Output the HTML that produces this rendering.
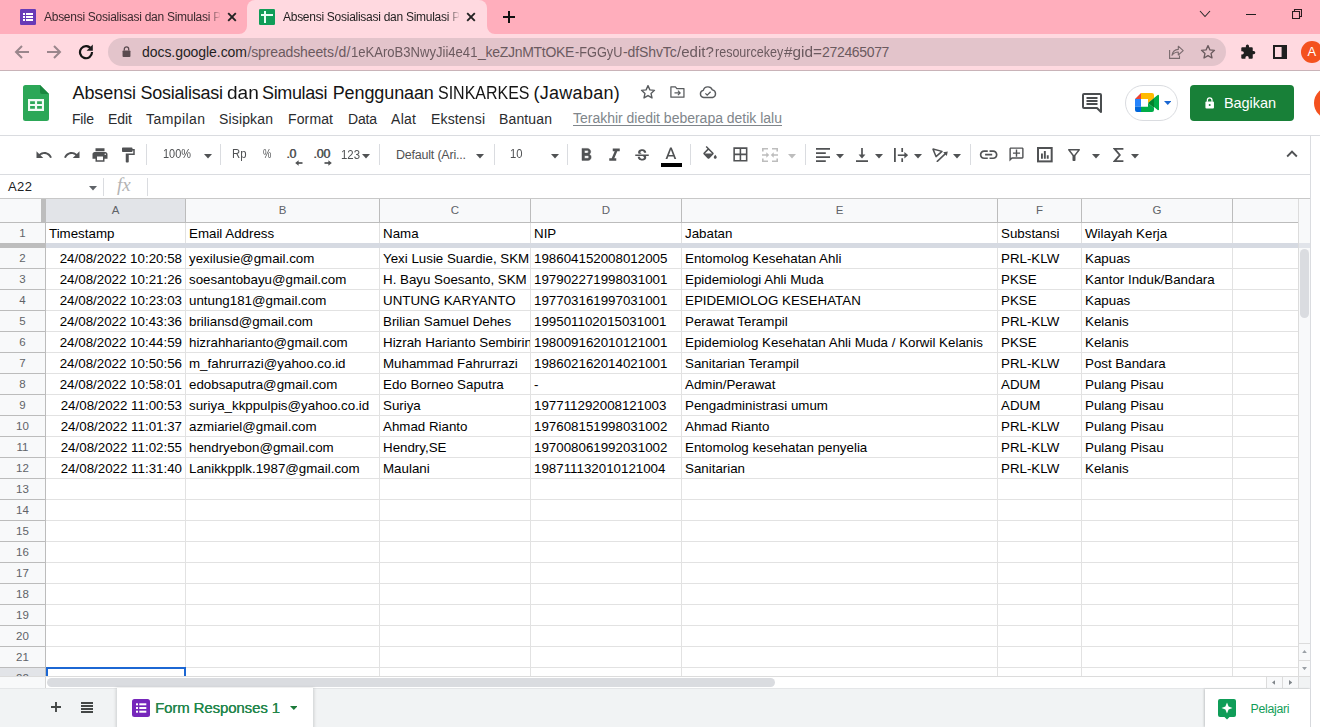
<!DOCTYPE html>
<html><head><meta charset="utf-8"><title>Absensi</title>
<style>
html,body{margin:0;padding:0;}
body{width:1320px;height:727px;overflow:hidden;position:relative;background:#fff;font-family:"Liberation Sans",sans-serif;}
.t{position:absolute;white-space:pre;font-family:"Liberation Sans",sans-serif;}
.b{position:absolute;display:block;}
#root{position:relative;width:1320px;height:727px;overflow:hidden;background:#fff;}
</style></head><body>
<div id="root">
<div class="b" style="left:0px;top:0px;width:1320px;height:34px;background:#ffaebc;"></div>
<div class="b" style="left:0px;top:34px;width:1320px;height:36px;background:#ffd9e0;"></div>
<div class="b" style="left:0px;top:70px;width:1320px;height:1px;background:#c9b3b8;"></div>
<div class="b" style="left:247px;top:0px;width:240px;height:34px;background:#ffd9e0;border-radius:8px 8px 0 0;"></div>
<svg class="b" style="left:239px;top:26px;" width="8" height="8" viewBox="0 0 8 8"><path d="M8 0 V8 H0 A8 8 0 0 0 8 0 Z" fill="#ffd9e0"/></svg>
<svg class="b" style="left:487px;top:26px;" width="8" height="8" viewBox="0 0 8 8"><path d="M0 0 V8 H8 A8 8 0 0 1 0 0 Z" fill="#ffd9e0"/></svg>
<svg class="b" style="left:20px;top:9px;" width="16" height="16" viewBox="0 0 16 16"><rect x="0" y="0" width="16" height="16" rx="1.3" fill="#673ab7"/><g fill="#fff"><rect x="3" y="4" width="2" height="2"/><rect x="6" y="4" width="7" height="2"/><rect x="3" y="7" width="2" height="2"/><rect x="6" y="7" width="7" height="2"/><rect x="3" y="10" width="2" height="2"/><rect x="6" y="10" width="7" height="2"/></g></svg>
<svg class="b" style="left:259px;top:9px;" width="16" height="16" viewBox="0 0 16 16"><rect x="0" y="0" width="16" height="16" rx="1.3" fill="#0f9d58"/><g fill="#e6fff6"><rect x="5" y="2" width="2" height="12"/><rect x="2" y="5" width="12" height="2"/></g></svg>
<span id="t1" class="t" style="left:44px;top:9px;font-size:12px;line-height:16px;color:#3a2a2e;font-weight:normal;-webkit-mask-image:linear-gradient(90deg,#000 0,#000 164px,transparent 177px);mask-image:linear-gradient(90deg,#000 0,#000 164px,transparent 177px);overflow:hidden;width:176px;letter-spacing:-0.27px;">Absensi Sosialisasi dan Simulasi Penggunaan</span>
<span id="t2" class="t" style="left:283px;top:9px;font-size:12px;line-height:16px;color:#1f1f1f;font-weight:normal;-webkit-mask-image:linear-gradient(90deg,#000 0,#000 164px,transparent 177px);mask-image:linear-gradient(90deg,#000 0,#000 164px,transparent 177px);overflow:hidden;width:176px;letter-spacing:-0.27px;">Absensi Sosialisasi dan Simulasi Penggunaan</span>
<svg class="b" style="left:227px;top:12px;" width="10" height="10" viewBox="0 0 10 10"><path d="M1.2 1.2 L8.8 8.8 M8.8 1.2 L1.2 8.8" stroke="#222" stroke-width="1.9" fill="none"/></svg>
<svg class="b" style="left:466px;top:12px;" width="10" height="10" viewBox="0 0 10 10"><path d="M1.2 1.2 L8.8 8.8 M8.8 1.2 L1.2 8.8" stroke="#222" stroke-width="1.9" fill="none"/></svg>
<svg class="b" style="left:503.1px;top:10.8px;" width="12" height="12" viewBox="0 0 12 12"><path d="M6 0 V12 M0 6 H12" stroke="#111" stroke-width="2" fill="none"/></svg>
<svg class="b" style="left:1199px;top:9px;" width="12" height="10" viewBox="0 0 12 10"><path d="M1 2 L6 7.5 L11 2" stroke="#2b2b2b" stroke-width="1.1" fill="none"/></svg>
<div class="b" style="left:1246px;top:14px;width:10px;height:1px;background:#1f1f1f;"></div>
<svg class="b" style="left:1292px;top:9px;" width="10" height="10" viewBox="0 0 10 10"><path d="M0.5 2.5 H7.5 V9.5 H0.5 Z M2.5 2.5 V0.5 H9.5 V7.5 H7.5" stroke="#2a1a1e" stroke-width="1.1" fill="none"/></svg>
<svg class="b" style="left:14px;top:44px;" width="16" height="16" viewBox="0 0 16 16"><path d="M15 8 H2 M8 2 L2 8 L8 14" stroke="#9a868c" stroke-width="2" fill="none"/></svg>
<svg class="b" style="left:46px;top:44px;" width="16" height="16" viewBox="0 0 16 16"><path d="M1 8 H14 M8 2 L14 8 L8 14" stroke="#9a868c" stroke-width="2" fill="none"/></svg>
<svg class="b" style="left:78px;top:44px;" width="16" height="16" viewBox="0 0 16 16"><path d="M13.2 5.2 A6 6 0 1 0 14 8" stroke="#151515" stroke-width="2.2" fill="none"/><path d="M14.8 0.6 V6.8 H8.6 Z" fill="#1f1f1f"/></svg>
<div class="b" style="left:108px;top:38px;width:1118px;height:28px;background:#e3c4cb;border-radius:14px;"></div>
<svg class="b" style="left:121.6px;top:45.7px;" width="9" height="11.4" viewBox="0 0 10 13"><rect x="0.5" y="5" width="9" height="7.5" rx="1" fill="#5a4b4f"/><path d="M2.5 5 V3.5 A2.5 2.5 0 0 1 7.5 3.5 V5" stroke="#5a4b4f" stroke-width="1.5" fill="none"/></svg>
<span id="t3" class="t" style="left:142px;top:43px;font-size:14px;line-height:18px;color:#1f1f1f;font-weight:normal;letter-spacing:-0.060px;">docs.google.com</span>
<span id="t4" class="t" style="left:247.4px;top:43px;font-size:14px;line-height:18px;color:#6b5a5f;font-weight:normal;letter-spacing:-0.121px;">/spreadsheets</span>
<span id="t5" class="t" style="left:334.5px;top:43px;font-size:14px;line-height:18px;color:#6b5a5f;font-weight:normal;letter-spacing:0.161px;">/d/</span>
<span id="t6" class="t" style="left:351px;top:43px;font-size:14px;line-height:18px;color:#6b5a5f;font-weight:normal;transform:scaleX(0.9335);transform-origin:left center;">1eKAroB3NwyJii4e41</span>
<span id="t7" class="t" style="left:478px;top:43px;font-size:14px;line-height:18px;color:#6b5a5f;font-weight:normal;letter-spacing:-0.290px;">_keZJnMTtOKE</span>
<span id="t8" class="t" style="left:575px;top:43px;font-size:14px;line-height:18px;color:#6b5a5f;font-weight:normal;transform:scaleX(0.9096);transform-origin:left center;">-FGGyU</span>
<span id="t9" class="t" style="left:623px;top:43px;font-size:14px;line-height:18px;color:#6b5a5f;font-weight:normal;letter-spacing:-0.110px;">-dfShvTc</span>
<span id="t10" class="t" style="left:677.3px;top:43px;font-size:14px;line-height:18px;color:#6b5a5f;font-weight:normal;transform:scaleX(1.0745);transform-origin:left center;">/edit?</span>
<span id="t11" class="t" style="left:714.7px;top:43px;font-size:14px;line-height:18px;color:#6b5a5f;font-weight:normal;transform:scaleX(0.8942);transform-origin:left center;">resourcekey</span>
<span id="t12" class="t" style="left:783.5px;top:43px;font-size:14px;line-height:18px;color:#6b5a5f;font-weight:normal;transform:scaleX(1.0965);transform-origin:left center;">#gid=</span>
<span id="t13" class="t" style="left:822.1px;top:43px;font-size:14px;line-height:18px;color:#6b5a5f;font-weight:normal;letter-spacing:-0.347px;">272465077</span>
<svg class="b" style="left:1169px;top:45px;" width="15" height="14" viewBox="0 0 15 14"><path d="M0.6 5 V13.4 H10.5 V10.5" stroke="#7a6a6e" stroke-width="1.1" fill="none"/><path d="M3 10.3 C3.6 6.6 6 4.6 9.3 4.4 V1.2 L14.2 5.6 L9.3 10 V7 C6.6 7 4.6 8 3 10.3 Z" stroke="#7a6a6e" stroke-width="1.1" fill="none" stroke-linejoin="round"/></svg>
<svg class="b" style="left:1200.2px;top:44.3px;" width="16" height="16" viewBox="0 0 18 18"><path d="M9 1.8 L11.1 6.6 L16.3 7.1 L12.4 10.6 L13.5 15.7 L9 13 L4.5 15.7 L5.6 10.6 L1.7 7.1 L6.9 6.6 Z" stroke="#6a5a5e" stroke-width="1.5" fill="none" stroke-linejoin="round"/></svg>
<svg class="b" style="left:1239.3px;top:43.6px;" width="16.5" height="16.5" viewBox="0 0 18 18"><path d="M7.5 2.2 a1.7 1.7 0 0 1 3.4 0 V3.5 H14 a1 1 0 0 1 1 1 V7.6 h1 a1.8 1.8 0 0 1 0 3.6 h-1 V15 a1 1 0 0 1 -1 1 H10.6 v-1 a1.8 1.8 0 0 0 -3.6 0 v1 H3.5 a1 1 0 0 1 -1 -1 V11.4 h1 a1.8 1.8 0 0 0 0 -3.6 h-1 V4.5 a1 1 0 0 1 1 -1 H7.5 Z" fill="#1f1f1f"/></svg>
<svg class="b" style="left:1273px;top:45px;" width="14" height="14" viewBox="0 0 14 14"><rect x="1" y="1" width="12" height="12" fill="none" stroke="#1f1f1f" stroke-width="2"/><rect x="8.6" y="1" width="4.4" height="12" fill="#1f1f1f"/></svg>
<div class="b" style="left:1301px;top:41px;width:22px;height:22px;background:#f4511e;border-radius:50%;"></div>
<span id="t14" class="t" style="left:1307.5px;top:44px;font-size:13px;line-height:16px;color:#fff;font-weight:normal;">A</span>
<div class="b" style="left:0px;top:135px;width:1320px;height:1px;background:#dadce0;"></div>
<svg class="b" style="left:23px;top:85px;" width="26" height="36" viewBox="0 0 26 36"><path d="M2.5 0 H17 L26 9 V33.5 A2.5 2.5 0 0 1 23.5 36 H2.5 A2.5 2.5 0 0 1 0 33.5 V2.5 A2.5 2.5 0 0 1 2.5 0 Z" fill="#2ca757"/><path d="M17 0 L26 9 H19 A2 2 0 0 1 17 7 Z" fill="#19873f"/><path d="M5 14 H21 V26 H5 Z M7.1 16.3 V18.9 H11.9 V16.3 Z M14.1 16.3 V18.9 H18.9 V16.3 Z M7.1 21.1 V23.7 H11.9 V21.1 Z M14.1 21.1 V23.7 H18.9 V21.1 Z" fill="#f1fbf4" fill-rule="evenodd"/></svg>
<span id="t15" class="t" style="left:72.5px;top:81px;font-size:18px;line-height:24px;color:#141414;font-weight:normal;letter-spacing:-0.074px;">Absensi</span>
<span id="t16" class="t" style="left:140.5px;top:81px;font-size:18px;line-height:24px;color:#141414;font-weight:normal;letter-spacing:-0.255px;">Sosialisasi</span>
<span id="t17" class="t" style="left:227.4px;top:81px;font-size:18px;line-height:24px;color:#141414;font-weight:normal;transform:scaleX(1.0583);transform-origin:left center;">dan</span>
<span id="t18" class="t" style="left:262.1px;top:81px;font-size:18px;line-height:24px;color:#141414;font-weight:normal;letter-spacing:-0.376px;">Simulasi</span>
<span id="t19" class="t" style="left:332.7px;top:81px;font-size:18px;line-height:24px;color:#141414;font-weight:normal;letter-spacing:-0.101px;">Penggunaan</span>
<span id="t20" class="t" style="left:438px;top:81px;font-size:18px;line-height:24px;color:#141414;font-weight:normal;transform:scaleX(0.8884);transform-origin:left center;">SINKARKES</span>
<span id="t21" class="t" style="left:533.4px;top:81px;font-size:18px;line-height:24px;color:#141414;font-weight:normal;letter-spacing:0.300px;">(Jawaban)</span>
<svg class="b" style="left:640.1px;top:84px;" width="16" height="16" viewBox="0 0 18 18"><path d="M9 1.8 L11.1 6.6 L16.3 7.1 L12.4 10.6 L13.5 15.7 L9 13 L4.5 15.7 L5.6 10.6 L1.7 7.1 L6.9 6.6 Z" stroke="#585b5e" stroke-width="1.55" fill="none" stroke-linejoin="round"/></svg>
<svg class="b" style="left:669.8px;top:85px;" width="15.3" height="14.4" viewBox="0 0 17 16"><path d="M1 2 H6 L7.6 4 H15.5 V13.5 H1 Z" stroke="#585b5e" stroke-width="1.4" fill="none" stroke-linejoin="round"/><path d="M5 8.8 H11 M8.8 6.3 L11.3 8.8 L8.8 11.3" stroke="#585b5e" stroke-width="1.3" fill="none"/></svg>
<svg class="b" style="left:699px;top:85px;" width="18" height="14" viewBox="0 0 18 14"><path d="M4.6 12.5 A3.6 3.6 0 0 1 4.3 5.4 A4.8 4.8 0 0 1 13.4 4.9 A3.9 3.9 0 0 1 13.6 12.5 Z" stroke="#585b5e" stroke-width="1.4" fill="none" stroke-linejoin="round"/><path d="M6.4 8.4 L8.2 10.2 L11.6 6.8" stroke="#585b5e" stroke-width="1.3" fill="none"/></svg>
<span id="t22" class="t" style="left:72px;top:109.5px;font-size:14px;line-height:18px;color:#2a2b2e;font-weight:normal;letter-spacing:-0.188px;">File</span>
<span id="t23" class="t" style="left:108px;top:109.5px;font-size:14px;line-height:18px;color:#2a2b2e;font-weight:normal;letter-spacing:-0.042px;">Edit</span>
<span id="t24" class="t" style="left:146px;top:109.5px;font-size:14px;line-height:18px;color:#2a2b2e;font-weight:normal;letter-spacing:0.424px;">Tampilan</span>
<span id="t25" class="t" style="left:219px;top:109.5px;font-size:14px;line-height:18px;color:#2a2b2e;font-weight:normal;letter-spacing:0.154px;">Sisipkan</span>
<span id="t26" class="t" style="left:288px;top:109.5px;font-size:14px;line-height:18px;color:#2a2b2e;font-weight:normal;letter-spacing:0.131px;">Format</span>
<span id="t27" class="t" style="left:348px;top:109.5px;font-size:14px;line-height:18px;color:#2a2b2e;font-weight:normal;letter-spacing:-0.193px;">Data</span>
<span id="t28" class="t" style="left:391px;top:109.5px;font-size:14px;line-height:18px;color:#2a2b2e;font-weight:normal;letter-spacing:0.292px;">Alat</span>
<span id="t29" class="t" style="left:431px;top:109.5px;font-size:14px;line-height:18px;color:#2a2b2e;font-weight:normal;letter-spacing:0.154px;">Ekstensi</span>
<span id="t30" class="t" style="left:499px;top:109.5px;font-size:14px;line-height:18px;color:#2a2b2e;font-weight:normal;letter-spacing:0.138px;">Bantuan</span>
<span id="t31" class="t" style="left:573px;top:109px;font-size:14px;line-height:18px;color:#80868b;font-weight:normal;letter-spacing:-0.011px;">Terakhir diedit beberapa detik lalu</span>
<div class="b" style="left:573px;top:124.7px;width:209px;height:1px;background:#80868b;"></div>
<svg class="b" style="left:1082px;top:93px;" width="20" height="20" viewBox="0 0 20 20"><path d="M1.2 1.2 H18.8 V14.8 H15.8 L18.8 18.4 V14.8 Z" fill="none"/><path d="M2 1 H18 A1 1 0 0 1 19 2 V19 L15 15 H2 A1 1 0 0 1 1 14 V2 A1 1 0 0 1 2 1 Z" stroke="#4a4d4f" stroke-width="2" fill="none" stroke-linejoin="round"/><path d="M4.5 5 H15.5 M4.5 8 H15.5 M4.5 11 H15.5" stroke="#4a4d4f" stroke-width="1.9"/></svg>
<div class="b" style="left:1124.5px;top:85px;width:51px;height:34px;background:#fff;border:1px solid #dadce0;border-radius:18px;box-sizing:content-box;"></div>
<svg class="b" style="left:1135px;top:93.3px;" width="24" height="19" viewBox="0 0 24 19"><path d="M0 6 L6 0 V6 Z" fill="#ea4335"/><path d="M6 0 H17 A2 2 0 0 1 19 2 V5 L13 10 V6 H6 Z" fill="#ffba00"/><path d="M0 6 H6 V13.5 H0 Z" fill="#2684fc"/><path d="M0 13.5 H6 V19 H2 A2 2 0 0 1 0 17 Z" fill="#0066da"/><path d="M6 13.5 H13 V10 L19 15 V17 A2 2 0 0 1 17 19 H6 Z" fill="#00ac47"/><path d="M13 10 L19 5 V15 Z" fill="#00832d"/><path d="M19 5 L22.7 2 A0.8 0.8 0 0 1 24 2.600 V16.400 A0.8 0.8 0 0 1 22.7 17 L19 14 Z" fill="#00ac47"/><rect x="6" y="6" width="7" height="7.5" fill="#fff"/></svg>
<svg class="b" style="left:1163.5px;top:101px;" width="7.5" height="4" viewBox="0 0 7.5 4"><path d="M0 0 H7.5 L3.75 4 Z" fill="#1a67d2"/></svg>
<div class="b" style="left:1190px;top:85px;width:104px;height:36px;background:#188038;border-radius:4px;"></div>
<svg class="b" style="left:1204.7px;top:96.7px;" width="9.4" height="12" viewBox="0 0 11 14"><rect x="0.5" y="5.2" width="10" height="8.3" rx="1.2" fill="#fff"/><path d="M2.8 5.4 V3.6 A2.7 2.7 0 0 1 8.2 3.6 V5.4" stroke="#fff" stroke-width="1.5" fill="none"/><circle cx="5.5" cy="9.4" r="1.2" fill="#188038"/></svg>
<span id="t32" class="t" style="left:1224px;top:94px;font-size:14.5px;line-height:18px;color:#fff;font-weight:normal;letter-spacing:-0.068px;">Bagikan</span>
<div class="b" style="left:1314px;top:87px;width:32px;height:32px;background:#f4511e;border-radius:50%;"></div>
<div class="b" style="left:1310px;top:136px;width:1px;height:591px;background:#dadce0;"></div>
<div class="b" style="left:0px;top:174px;width:1310px;height:1px;background:#dadce0;"></div>
<svg class="b" style="left:35px;top:146px;" width="18" height="18" viewBox="0 0 24 24"><path d="M12.5 8c-2.65 0-5.05.99-6.9 2.6L2 7v9h9l-3.62-3.62c1.39-1.16 3.16-1.88 5.12-1.88 3.54 0 6.55 2.31 7.6 5.5l2.37-.78C21.08 11.03 17.15 8 12.5 8z" fill="#505254" /></svg>
<svg class="b" style="left:63px;top:146px;" width="18" height="18" viewBox="0 0 24 24"><path d="M18.4 10.6C16.55 8.99 14.15 8 11.5 8c-4.65 0-8.58 3.03-9.96 7.22L3.9 16c1.05-3.19 4.05-5.5 7.6-5.5 1.95 0 3.73.72 5.12 1.88L13 16h9V7l-3.6 3.6z" fill="#505254" /></svg>
<svg class="b" style="left:91px;top:146px;" width="18" height="18" viewBox="0 0 24 24"><path d="M19 8H5c-1.66 0-3 1.34-3 3v6h4v4h12v-4h4v-6c0-1.66-1.34-3-3-3zm-3 11H8v-5h8v5zm3-7c-.55 0-1-.45-1-1s.45-1 1-1 1 .45 1 1-.45 1-1 1zm-1-9H6v4h12V3z" fill="#505254" /></svg>
<svg class="b" style="left:119px;top:146px;" width="18" height="18" viewBox="0 0 24 24"><path d="M18 4V3c0-.55-.45-1-1-1H5c-.55 0-1 .45-1 1v4c0 .55.45 1 1 1h12c.55 0 1-.45 1-1V6h1v4H9v11c0 .55.45 1 1 1h2c.55 0 1-.45 1-1v-9h8V4h-3z" fill="#505254" /></svg>
<div class="b" style="left:146px;top:144px;width:1px;height:21px;background:#dadce0;"></div>
<span id="t33" class="t" style="left:163px;top:147px;font-size:12.5px;line-height:15px;color:#505254;font-weight:normal;transform:scaleX(0.8754);transform-origin:left center;">100%</span>
<svg class="b" style="left:204px;top:153.5px;" width="8" height="5" viewBox="0 0 8 5"><path d="M0 0 H8 L4 4.5 Z" fill="#505254"/></svg>
<div class="b" style="left:220px;top:144px;width:1px;height:21px;background:#dadce0;"></div>
<span id="t34" class="t" style="left:232px;top:147px;font-size:12px;line-height:15px;color:#505254;font-weight:normal;transform:scaleX(0.9450);transform-origin:left center;">Rp</span>
<span id="t35" class="t" style="left:263.2px;top:147px;font-size:12.5px;line-height:15px;color:#505254;font-weight:normal;transform:scaleX(.75);transform-origin:left center;">%</span>
<span id="t36" class="t" style="left:286.3px;top:147px;font-size:12.5px;line-height:15px;color:#505254;font-weight:normal;letter-spacing:-0.438px;text-shadow:0.4px 0 0 #505254;">.0</span>
<svg class="b" style="left:294.5px;top:160.2px;" width="8" height="6" viewBox="0 0 8 6"><path d="M7.5 3 H2.2" stroke="#505254" stroke-width="1.7" fill="none"/><path d="M0.2 3 L3.6 0.3 V5.7 Z" fill="#505254"/></svg>
<span id="t37" class="t" style="left:313.3px;top:147px;font-size:12.5px;line-height:15px;color:#505254;font-weight:normal;letter-spacing:-0.195px;text-shadow:0.4px 0 0 #505254;">.00</span>
<svg class="b" style="left:324.3px;top:160.2px;" width="8" height="6" viewBox="0 0 8 6"><path d="M0.5 3 H5.8" stroke="#505254" stroke-width="1.7" fill="none"/><path d="M7.8 3 L4.4 0.3 V5.7 Z" fill="#505254"/></svg>
<span id="t38" class="t" style="left:341px;top:148px;font-size:12.5px;line-height:15px;color:#505254;font-weight:normal;transform:scaleX(0.9109);transform-origin:left center;">123</span>
<svg class="b" style="left:362.3px;top:153.5px;" width="8" height="5" viewBox="0 0 8 5"><path d="M0 0 H8 L4 4.5 Z" fill="#505254"/></svg>
<div class="b" style="left:379px;top:144px;width:1px;height:21px;background:#dadce0;"></div>
<span id="t39" class="t" style="left:396px;top:148px;font-size:12.5px;line-height:15px;color:#505254;font-weight:normal;letter-spacing:-0.210px;">Default (Ari...</span>
<svg class="b" style="left:476px;top:153.5px;" width="8" height="5" viewBox="0 0 8 5"><path d="M0 0 H8 L4 4.5 Z" fill="#505254"/></svg>
<div class="b" style="left:494px;top:144px;width:1px;height:21px;background:#dadce0;"></div>
<span id="t40" class="t" style="left:510px;top:147px;font-size:12.5px;line-height:15px;color:#505254;font-weight:normal;transform:scaleX(0.8989);transform-origin:left center;">10</span>
<svg class="b" style="left:551px;top:153.5px;" width="8" height="5" viewBox="0 0 8 5"><path d="M0 0 H8 L4 4.5 Z" fill="#505254"/></svg>
<div class="b" style="left:567px;top:144px;width:1px;height:21px;background:#dadce0;"></div>
<svg class="b" style="left:575.55px;top:144.75px;" width="20.5" height="20.5" viewBox="0 0 24 24"><path d="M15.6 10.79c.97-.67 1.65-1.77 1.65-2.79 0-2.26-1.75-4-4-4H7v14h7.04c2.09 0 3.71-1.7 3.71-3.79 0-1.52-.86-2.82-2.15-3.42zM10 6.5h3c.83 0 1.5.67 1.5 1.5s-.67 1.5-1.5 1.5h-3v-3zm3.500 9H10v-3h3.5c.83 0 1.5.67 1.5 1.500s-.67 1.500-1.500 1.500z" fill="#505254" stroke="#505254" stroke-width="0.5"/></svg>
<svg class="b" style="left:603.6px;top:144.5px;" width="21" height="21" viewBox="0 0 24 24"><path d="M10 4v3h2.210l-3.420 8H6v3h8v-3h-2.210l3.420-8H18V4z" fill="#505254" /></svg>
<svg class="b" style="left:633px;top:147.2px;" width="18" height="18" viewBox="0 0 24 24"><path d="M7.24 8.75c-.26-.48-.39-1.03-.39-1.67 0-.61.13-1.16.4-1.67.26-.5.63-.93 1.11-1.29.48-.35 1.05-.63 1.7-.83.66-.19 1.39-.29 2.18-.29.81 0 1.54.11 2.21.34.66.22 1.23.54 1.69.94.47.4.83.88 1.08 1.43.25.55.38 1.15.38 1.81h-3.010c0-.31-.05-.59-.15-.85-.09-.27-.24-.49-.44-.68-.2-.19-.45-.33-.75-.44-.3-.1-.66-.16-1.06-.16-.39 0-.74.04-1.03.13-.29.09-.53.21-.72.36-.19.16-.34.34-.44.55-.1.21-.15.43-.15.66 0 .48.25.88.74 1.21.38.25.77.48 1.41.7H7.39c-.05-.08-.11-.17-.15-.25zM21 12v-2H3v2h9.620c.18.07.4.14.55.2.37.17.66.34.87.51.21.17.35.36.43.57.07.2.11.43.11.69 0 .23-.05.45-.14.66-.09.2-.23.38-.42.53-.19.15-.42.26-.71.35-.29.08-.63.13-1.010.13-.43 0-.83-.04-1.18-.13s-.66-.23-.91-.42c-.25-.19-.45-.44-.59-.75-.14-.31-.25-.76-.25-1.210H6.400c0 .55.08 1.130.24 1.580.16.45.37.85.65 1.210.28.35.6.66.98.92.37.26.78.48 1.220.65.44.17.9.3 1.380.39.48.08.96.13 1.440.13.8 0 1.530-.09 2.180-.28s1.210-.45 1.670-.79c.46-.34.82-.77 1.070-1.270s.38-1.070.38-1.710c0-.6-.1-1.140-.31-1.610-.05-.11-.11-.23-.17-.33H21z" fill="#505254" /></svg>
<svg class="b" style="left:661.1px;top:144.7px;" width="19.8" height="19.8" viewBox="0 0 24 24"><path d="M11 3L5.500 17h2.250l1.120-3h6.250l1.120 3h2.250L13 3h-2zm-1.380 9L12 5.670 14.380 12H9.620z" fill="#505254" /></svg>
<div class="b" style="left:661px;top:163px;width:21px;height:4px;background:#000;"></div>
<div class="b" style="left:690px;top:144px;width:1px;height:21px;background:#dadce0;"></div>
<svg class="b" style="left:701px;top:145.5px;" width="18" height="18" viewBox="0 0 24 24"><path d="M16.560 8.940L7.620 0 6.210 1.410l2.380 2.380-5.150 5.150c-.59.59-.59 1.540 0 2.120l5.500 5.500c.29.29.68.44 1.060.44s.77-.15 1.060-.44l5.500-5.500c.59-.58.59-1.530 0-2.120zM5.210 10L10 5.210 14.790 10H5.210zM19 11.500s-2 2.170-2 3.500c0 1.100.9 2 2 2s2-.9 2-2c0-1.330-2-3.500-2-3.500z" fill="#505254" /></svg>
<svg class="b" style="left:730.5px;top:145.4px;" width="18.8" height="18.8" viewBox="0 0 24 24"><path d="M3 3v18h18V3H3zm8 16H5v-6h6v6zm0-8H5V5h6v6zm8 8h-6v-6h6v6zm0-8h-6V5h6v6z" fill="#505254" /></svg>
<svg class="b" style="left:762px;top:147.8px;" width="16" height="14" viewBox="0 0 16 14"><path d="M0.8 0 V3.4 M0.8 10.6 V14 M15.2 0 V3.4 M15.2 10.6 V14" stroke="#bdbdbd" stroke-width="1.6" fill="none"/><path d="M0 0.8 H6 M10 0.8 H16 M0 13.2 H6 M10 13.2 H16" stroke="#bdbdbd" stroke-width="1.6" fill="none"/><path d="M0 7 H5 M16 7 H11" stroke="#bdbdbd" stroke-width="1.5" fill="none"/><path d="M7.2 7 L4.3 4.3 V9.7 Z M8.8 7 L11.7 4.3 V9.7 Z" fill="#bdbdbd"/></svg>
<svg class="b" style="left:787.8px;top:153.5px;" width="8" height="5" viewBox="0 0 8 5"><path d="M0 0 H8 L4 4.5 Z" fill="#bdbdbd"/></svg>
<div class="b" style="left:805px;top:144px;width:1px;height:21px;background:#dadce0;"></div>
<svg class="b" style="left:816px;top:147.8px;" width="14.2" height="14" viewBox="0 0 14.2 14"><path d="M0 0.9 H14.2 M0 5 H9.8 M0 9.1 H14.2 M0 13.1 H9.8" stroke="#505254" stroke-width="1.75" fill="none"/></svg>
<svg class="b" style="left:836.1px;top:153.7px;" width="8" height="5" viewBox="0 0 8 5"><path d="M0 0 H8 L4 4.5 Z" fill="#505254"/></svg>
<svg class="b" style="left:856px;top:147.8px;" width="12" height="14" viewBox="0 0 12 14"><path d="M0 13.1 H12" stroke="#505254" stroke-width="1.75"/><path d="M6 0 V8" stroke="#505254" stroke-width="1.7"/><path d="M2.6 6.6 H9.4 L6 10.4 Z" fill="#505254"/></svg>
<svg class="b" style="left:874.9px;top:153.7px;" width="8" height="5" viewBox="0 0 8 5"><path d="M0 0 H8 L4 4.5 Z" fill="#505254"/></svg>
<svg class="b" style="left:893.6px;top:147.8px;" width="14.4" height="14" viewBox="0 0 14.4 14"><path d="M0.9 0 V14" stroke="#505254" stroke-width="1.8"/><path d="M8.2 0 V4 M8.2 10.2 V14" stroke="#505254" stroke-width="1.7"/><path d="M3.8 7.2 H11" stroke="#505254" stroke-width="1.6"/><path d="M14.2 7.2 L10.4 4 V10.4 Z" fill="#505254"/></svg>
<svg class="b" style="left:914.1px;top:153.7px;" width="8" height="5" viewBox="0 0 8 5"><path d="M0 0 H8 L4 4.5 Z" fill="#505254"/></svg>
<svg class="b" style="left:932.4px;top:147.6px;" width="16.4" height="14.4" viewBox="0 0 16.4 14.4"><path d="M1 1.1 L10 3.4 L4 8.6 Z" stroke="#505254" stroke-width="1.5" fill="none" stroke-linejoin="round"/><path d="M4.8 13.8 L14 5.2" stroke="#505254" stroke-width="1.6" fill="none"/><path d="M15.8 3.4 L11.2 4.2 L14.8 8 Z" fill="#505254"/></svg>
<svg class="b" style="left:953.3px;top:153.7px;" width="8" height="5" viewBox="0 0 8 5"><path d="M0 0 H8 L4 4.5 Z" fill="#505254"/></svg>
<div class="b" style="left:970px;top:144px;width:1px;height:21px;background:#dadce0;"></div>
<svg class="b" style="left:978.35px;top:144.35px;" width="21.3" height="21.3" viewBox="0 0 24 24"><path d="M3.900 12c0-1.710 1.390-3.100 3.100-3.100h4V7H7c-2.760 0-5 2.240-5 5s2.240 5 5 5h4v-1.900H7c-1.710 0-3.100-1.390-3.100-3.100zM8 13h8v-2H8v2zm9-6h-4v1.900h4c1.710 0 3.100 1.390 3.100 3.100s-1.390 3.100-3.100 3.100h-4V17h4c2.760 0 5-2.240 5-5s-2.240-5-5-5z" fill="#505254" /></svg>
<svg class="b" style="left:1008.4px;top:146.3px;" width="17" height="17" viewBox="0 0 24 24"><path d="M2 4c0-1.100.9-2 2-2h16c1.100 0 2 .9 2 2v12c0 1.100-.9 2-2 2H6l-4 4V4zm2 13.170L5.170 16H20V4H4v13.170zM11 5h2v4h4v2h-4v4h-2v-4H7V9h4z" fill="#505254" /></svg>
<svg class="b" style="left:1037.1px;top:147.3px;" width="15.7" height="15.4" viewBox="0 0 15.7 15.4"><rect x="1" y="1" width="13.7" height="13.4" fill="none" stroke="#505254" stroke-width="2"/><path d="M4 6.6 H5.9 V11.8 H4 Z M6.9 4 H8.8 V11.8 H6.9 Z M9.8 8.3 H11.7 V11.8 H9.8 Z" fill="#505254"/></svg>
<svg class="b" style="left:1065.2px;top:145.6px;" width="18" height="18" viewBox="0 0 24 24"><path d="M7 6h10l-5.010 6.300L7 6zm-2.750-.39C6.270 8.200 10 13 10 13v6c0 .55.45 1 1 1h2c.55 0 1-.45 1-1v-6s3.720-4.800 5.740-7.390c.51-.66.04-1.610-.79-1.610H5.040c-.83 0-1.300.95-.79 1.610z" fill="#505254" /></svg>
<svg class="b" style="left:1092px;top:153.7px;" width="8" height="5" viewBox="0 0 8 5"><path d="M0 0 H8 L4 4.5 Z" fill="#505254"/></svg>
<svg class="b" style="left:1112.6px;top:147.8px;" width="11" height="14" viewBox="0 0 11 14"><path d="M10.4 0.9 H1.6 L6.8 7 L1.6 13.1 H10.4" stroke="#505254" stroke-width="1.8" fill="none" stroke-linejoin="miter"/></svg>
<svg class="b" style="left:1131px;top:153.7px;" width="8" height="5" viewBox="0 0 8 5"><path d="M0 0 H8 L4 4.5 Z" fill="#505254"/></svg>
<svg class="b" style="left:1280.8px;top:143px;" width="22" height="22" viewBox="0 0 24 24"><path d="M12 8l-6 6 1.410 1.410L12 10.830l4.590 4.580L18 14z" fill="#505254" /></svg>
<div class="b" style="left:0px;top:198px;width:1310px;height:1px;background:#c8c8c8;"></div>
<span id="t41" class="t" style="left:8px;top:179px;font-size:13px;line-height:16px;color:#202124;font-weight:normal;letter-spacing:0.430px;">A22</span>
<svg class="b" style="left:89px;top:185.5px;" width="8" height="5" viewBox="0 0 8 5"><path d="M0 0 H8 L4 4.5 Z" fill="#5f6368"/></svg>
<div class="b" style="left:103px;top:178px;width:1px;height:18px;background:#dadce0;"></div>
<span id="t42" class="t" style="left:117px;top:175px;font-size:19px;line-height:20px;color:#b4b4b4;font-weight:normal;font-family:'Liberation Serif',serif;font-style:italic;"><i>f</i>x</span>
<div class="b" style="left:147px;top:178px;width:1px;height:18px;background:#dadce0;"></div>
<div class="b" style="left:0px;top:199px;width:1299px;height:23px;background:#f8f9fa;"></div>
<div class="b" style="left:0px;top:222px;width:46px;height:454px;background:#f8f9fa;"></div>
<div class="b" style="left:46px;top:199px;width:139px;height:23px;background:#e2e4e8;"></div>
<div class="b" style="left:0px;top:222px;width:1299px;height:1px;background:#bcbcbc;"></div>
<div class="b" style="left:45px;top:199px;width:1px;height:24px;background:#bcbcbc;"></div>
<div class="b" style="left:185px;top:199px;width:1px;height:24px;background:#bcbcbc;"></div>
<div class="b" style="left:379px;top:199px;width:1px;height:24px;background:#bcbcbc;"></div>
<div class="b" style="left:530px;top:199px;width:1px;height:24px;background:#bcbcbc;"></div>
<div class="b" style="left:681px;top:199px;width:1px;height:24px;background:#bcbcbc;"></div>
<div class="b" style="left:997px;top:199px;width:1px;height:24px;background:#bcbcbc;"></div>
<div class="b" style="left:1081px;top:199px;width:1px;height:24px;background:#bcbcbc;"></div>
<div class="b" style="left:1232px;top:199px;width:1px;height:24px;background:#bcbcbc;"></div>
<div class="b" style="left:1298px;top:199px;width:1px;height:24px;background:#bcbcbc;"></div>
<div class="b" style="left:41px;top:199px;width:5px;height:23px;background:#bdbdbd;"></div>
<span id="t43" class="t" style="left:95.5px;top:203px;font-size:11.5px;line-height:15px;color:#5f6368;font-weight:normal;width:40px;text-align:center;">A</span>
<span id="t44" class="t" style="left:262.5px;top:203px;font-size:11.5px;line-height:15px;color:#5f6368;font-weight:normal;width:40px;text-align:center;">B</span>
<span id="t45" class="t" style="left:435px;top:203px;font-size:11.5px;line-height:15px;color:#5f6368;font-weight:normal;width:40px;text-align:center;">C</span>
<span id="t46" class="t" style="left:586px;top:203px;font-size:11.5px;line-height:15px;color:#5f6368;font-weight:normal;width:40px;text-align:center;">D</span>
<span id="t47" class="t" style="left:819.5px;top:203px;font-size:11.5px;line-height:15px;color:#5f6368;font-weight:normal;width:40px;text-align:center;">E</span>
<span id="t48" class="t" style="left:1019.5px;top:203px;font-size:11.5px;line-height:15px;color:#5f6368;font-weight:normal;width:40px;text-align:center;">F</span>
<span id="t49" class="t" style="left:1137px;top:203px;font-size:11.5px;line-height:15px;color:#5f6368;font-weight:normal;width:40px;text-align:center;">G</span>
<div class="b" style="left:46px;top:268px;width:1253px;height:1px;background:#e2e2e2;"></div>
<div class="b" style="left:0px;top:268px;width:46px;height:1px;background:#bcbcbc;"></div>
<div class="b" style="left:46px;top:289px;width:1253px;height:1px;background:#e2e2e2;"></div>
<div class="b" style="left:0px;top:289px;width:46px;height:1px;background:#bcbcbc;"></div>
<div class="b" style="left:46px;top:310px;width:1253px;height:1px;background:#e2e2e2;"></div>
<div class="b" style="left:0px;top:310px;width:46px;height:1px;background:#bcbcbc;"></div>
<div class="b" style="left:46px;top:331px;width:1253px;height:1px;background:#e2e2e2;"></div>
<div class="b" style="left:0px;top:331px;width:46px;height:1px;background:#bcbcbc;"></div>
<div class="b" style="left:46px;top:352px;width:1253px;height:1px;background:#e2e2e2;"></div>
<div class="b" style="left:0px;top:352px;width:46px;height:1px;background:#bcbcbc;"></div>
<div class="b" style="left:46px;top:373px;width:1253px;height:1px;background:#e2e2e2;"></div>
<div class="b" style="left:0px;top:373px;width:46px;height:1px;background:#bcbcbc;"></div>
<div class="b" style="left:46px;top:394px;width:1253px;height:1px;background:#e2e2e2;"></div>
<div class="b" style="left:0px;top:394px;width:46px;height:1px;background:#bcbcbc;"></div>
<div class="b" style="left:46px;top:415px;width:1253px;height:1px;background:#e2e2e2;"></div>
<div class="b" style="left:0px;top:415px;width:46px;height:1px;background:#bcbcbc;"></div>
<div class="b" style="left:46px;top:436px;width:1253px;height:1px;background:#e2e2e2;"></div>
<div class="b" style="left:0px;top:436px;width:46px;height:1px;background:#bcbcbc;"></div>
<div class="b" style="left:46px;top:457px;width:1253px;height:1px;background:#e2e2e2;"></div>
<div class="b" style="left:0px;top:457px;width:46px;height:1px;background:#bcbcbc;"></div>
<div class="b" style="left:46px;top:478px;width:1253px;height:1px;background:#e2e2e2;"></div>
<div class="b" style="left:0px;top:478px;width:46px;height:1px;background:#bcbcbc;"></div>
<div class="b" style="left:46px;top:499px;width:1253px;height:1px;background:#e2e2e2;"></div>
<div class="b" style="left:0px;top:499px;width:46px;height:1px;background:#bcbcbc;"></div>
<div class="b" style="left:46px;top:520px;width:1253px;height:1px;background:#e2e2e2;"></div>
<div class="b" style="left:0px;top:520px;width:46px;height:1px;background:#bcbcbc;"></div>
<div class="b" style="left:46px;top:541px;width:1253px;height:1px;background:#e2e2e2;"></div>
<div class="b" style="left:0px;top:541px;width:46px;height:1px;background:#bcbcbc;"></div>
<div class="b" style="left:46px;top:562px;width:1253px;height:1px;background:#e2e2e2;"></div>
<div class="b" style="left:0px;top:562px;width:46px;height:1px;background:#bcbcbc;"></div>
<div class="b" style="left:46px;top:583px;width:1253px;height:1px;background:#e2e2e2;"></div>
<div class="b" style="left:0px;top:583px;width:46px;height:1px;background:#bcbcbc;"></div>
<div class="b" style="left:46px;top:604px;width:1253px;height:1px;background:#e2e2e2;"></div>
<div class="b" style="left:0px;top:604px;width:46px;height:1px;background:#bcbcbc;"></div>
<div class="b" style="left:46px;top:625px;width:1253px;height:1px;background:#e2e2e2;"></div>
<div class="b" style="left:0px;top:625px;width:46px;height:1px;background:#bcbcbc;"></div>
<div class="b" style="left:46px;top:646px;width:1253px;height:1px;background:#e2e2e2;"></div>
<div class="b" style="left:0px;top:646px;width:46px;height:1px;background:#bcbcbc;"></div>
<div class="b" style="left:46px;top:667px;width:1253px;height:1px;background:#e2e2e2;"></div>
<div class="b" style="left:0px;top:667px;width:46px;height:1px;background:#bcbcbc;"></div>
<div class="b" style="left:185px;top:223px;width:1px;height:453px;background:#e2e2e2;"></div>
<div class="b" style="left:379px;top:223px;width:1px;height:453px;background:#e2e2e2;"></div>
<div class="b" style="left:530px;top:223px;width:1px;height:453px;background:#e2e2e2;"></div>
<div class="b" style="left:681px;top:223px;width:1px;height:453px;background:#e2e2e2;"></div>
<div class="b" style="left:997px;top:223px;width:1px;height:453px;background:#e2e2e2;"></div>
<div class="b" style="left:1081px;top:223px;width:1px;height:453px;background:#e2e2e2;"></div>
<div class="b" style="left:1232px;top:223px;width:1px;height:453px;background:#e2e2e2;"></div>
<div class="b" style="left:1298px;top:223px;width:1px;height:453px;background:#e2e2e2;"></div>
<div class="b" style="left:45px;top:223px;width:1px;height:453px;background:#bcbcbc;"></div>
<div class="b" style="left:46px;top:243px;width:1253px;height:5px;background:#d6dae2;"></div>
<div class="b" style="left:0px;top:243px;width:46px;height:5px;background:#bdbdbd;"></div>
<div class="b" style="left:0px;top:668px;width:45px;height:8px;background:#e2e4e8;"></div>
<span id="t50" class="t" style="left:0px;top:226px;font-size:11.5px;line-height:15px;color:#5f6368;font-weight:normal;width:45px;text-align:center;">1</span>
<span id="t51" class="t" style="left:0px;top:251px;font-size:11.5px;line-height:15px;color:#5f6368;font-weight:normal;width:45px;text-align:center;">2</span>
<span id="t52" class="t" style="left:0px;top:272px;font-size:11.5px;line-height:15px;color:#5f6368;font-weight:normal;width:45px;text-align:center;">3</span>
<span id="t53" class="t" style="left:0px;top:293px;font-size:11.5px;line-height:15px;color:#5f6368;font-weight:normal;width:45px;text-align:center;">4</span>
<span id="t54" class="t" style="left:0px;top:314px;font-size:11.5px;line-height:15px;color:#5f6368;font-weight:normal;width:45px;text-align:center;">5</span>
<span id="t55" class="t" style="left:0px;top:335px;font-size:11.5px;line-height:15px;color:#5f6368;font-weight:normal;width:45px;text-align:center;">6</span>
<span id="t56" class="t" style="left:0px;top:356px;font-size:11.5px;line-height:15px;color:#5f6368;font-weight:normal;width:45px;text-align:center;">7</span>
<span id="t57" class="t" style="left:0px;top:377px;font-size:11.5px;line-height:15px;color:#5f6368;font-weight:normal;width:45px;text-align:center;">8</span>
<span id="t58" class="t" style="left:0px;top:398px;font-size:11.5px;line-height:15px;color:#5f6368;font-weight:normal;width:45px;text-align:center;">9</span>
<span id="t59" class="t" style="left:0px;top:419px;font-size:11.5px;line-height:15px;color:#5f6368;font-weight:normal;width:45px;text-align:center;">10</span>
<span id="t60" class="t" style="left:0px;top:440px;font-size:11.5px;line-height:15px;color:#5f6368;font-weight:normal;width:45px;text-align:center;">11</span>
<span id="t61" class="t" style="left:0px;top:461px;font-size:11.5px;line-height:15px;color:#5f6368;font-weight:normal;width:45px;text-align:center;">12</span>
<span id="t62" class="t" style="left:0px;top:482px;font-size:11.5px;line-height:15px;color:#5f6368;font-weight:normal;width:45px;text-align:center;">13</span>
<span id="t63" class="t" style="left:0px;top:503px;font-size:11.5px;line-height:15px;color:#5f6368;font-weight:normal;width:45px;text-align:center;">14</span>
<span id="t64" class="t" style="left:0px;top:524px;font-size:11.5px;line-height:15px;color:#5f6368;font-weight:normal;width:45px;text-align:center;">15</span>
<span id="t65" class="t" style="left:0px;top:545px;font-size:11.5px;line-height:15px;color:#5f6368;font-weight:normal;width:45px;text-align:center;">16</span>
<span id="t66" class="t" style="left:0px;top:566px;font-size:11.5px;line-height:15px;color:#5f6368;font-weight:normal;width:45px;text-align:center;">17</span>
<span id="t67" class="t" style="left:0px;top:587px;font-size:11.5px;line-height:15px;color:#5f6368;font-weight:normal;width:45px;text-align:center;">18</span>
<span id="t68" class="t" style="left:0px;top:608px;font-size:11.5px;line-height:15px;color:#5f6368;font-weight:normal;width:45px;text-align:center;">19</span>
<span id="t69" class="t" style="left:0px;top:629px;font-size:11.5px;line-height:15px;color:#5f6368;font-weight:normal;width:45px;text-align:center;">20</span>
<span id="t70" class="t" style="left:0px;top:650px;font-size:11.5px;line-height:15px;color:#5f6368;font-weight:normal;width:45px;text-align:center;">21</span>
<span id="t71" class="t" style="left:0px;top:670.5px;font-size:11.5px;line-height:15px;color:#5f6368;font-weight:normal;width:45px;text-align:center;clip-path:inset(0 0 8px 0);">22</span>
<span id="t72" class="t" style="left:46px;top:226px;font-size:13.333px;line-height:16px;color:#000;font-weight:normal;width:139px;overflow:hidden;box-sizing:border-box;padding:0 3px;">Timestamp</span>
<span id="t73" class="t" style="left:186px;top:226px;font-size:13.333px;line-height:16px;color:#000;font-weight:normal;width:193px;overflow:hidden;box-sizing:border-box;padding:0 3px;">Email Address</span>
<span id="t74" class="t" style="left:380px;top:226px;font-size:13.333px;line-height:16px;color:#000;font-weight:normal;width:150px;overflow:hidden;box-sizing:border-box;padding:0 3px;">Nama</span>
<span id="t75" class="t" style="left:531px;top:226px;font-size:13.333px;line-height:16px;color:#000;font-weight:normal;width:150px;overflow:hidden;box-sizing:border-box;padding:0 3px;">NIP</span>
<span id="t76" class="t" style="left:682px;top:226px;font-size:13.333px;line-height:16px;color:#000;font-weight:normal;width:315px;overflow:hidden;box-sizing:border-box;padding:0 3px;">Jabatan</span>
<span id="t77" class="t" style="left:998px;top:226px;font-size:13.333px;line-height:16px;color:#000;font-weight:normal;width:83px;overflow:hidden;box-sizing:border-box;padding:0 3px;">Substansi</span>
<span id="t78" class="t" style="left:1082px;top:226px;font-size:13.333px;line-height:16px;color:#000;font-weight:normal;width:150px;overflow:hidden;box-sizing:border-box;padding:0 3px;">Wilayah Kerja</span>
<span id="t79" class="t" style="left:46px;top:251px;font-size:13.333px;line-height:16px;color:#000;font-weight:normal;width:139px;overflow:hidden;box-sizing:border-box;padding:0 3px;text-align:right;">24/08/2022 10:20:58</span>
<span id="t80" class="t" style="left:186px;top:251px;font-size:13.333px;line-height:16px;color:#000;font-weight:normal;width:193px;overflow:hidden;box-sizing:border-box;padding:0 3px;">yexilusie@gmail.com</span>
<span id="t81" class="t" style="left:380px;top:251px;font-size:13.333px;line-height:16px;color:#000;font-weight:normal;width:150px;overflow:hidden;box-sizing:border-box;padding:0 3px;">Yexi Lusie Suardie, SKM</span>
<span id="t82" class="t" style="left:531px;top:251px;font-size:13.333px;line-height:16px;color:#000;font-weight:normal;width:150px;overflow:hidden;box-sizing:border-box;padding:0 3px;">198604152008012005</span>
<span id="t83" class="t" style="left:682px;top:251px;font-size:13.333px;line-height:16px;color:#000;font-weight:normal;width:315px;overflow:hidden;box-sizing:border-box;padding:0 3px;">Entomolog Kesehatan Ahli</span>
<span id="t84" class="t" style="left:998px;top:251px;font-size:13.333px;line-height:16px;color:#000;font-weight:normal;width:83px;overflow:hidden;box-sizing:border-box;padding:0 3px;">PRL-KLW</span>
<span id="t85" class="t" style="left:1082px;top:251px;font-size:13.333px;line-height:16px;color:#000;font-weight:normal;width:150px;overflow:hidden;box-sizing:border-box;padding:0 3px;">Kapuas</span>
<span id="t86" class="t" style="left:46px;top:272px;font-size:13.333px;line-height:16px;color:#000;font-weight:normal;width:139px;overflow:hidden;box-sizing:border-box;padding:0 3px;text-align:right;">24/08/2022 10:21:26</span>
<span id="t87" class="t" style="left:186px;top:272px;font-size:13.333px;line-height:16px;color:#000;font-weight:normal;width:193px;overflow:hidden;box-sizing:border-box;padding:0 3px;">soesantobayu@gmail.com</span>
<span id="t88" class="t" style="left:380px;top:272px;font-size:13.333px;line-height:16px;color:#000;font-weight:normal;width:150px;overflow:hidden;box-sizing:border-box;padding:0 3px;">H. Bayu Soesanto, SKM</span>
<span id="t89" class="t" style="left:531px;top:272px;font-size:13.333px;line-height:16px;color:#000;font-weight:normal;width:150px;overflow:hidden;box-sizing:border-box;padding:0 3px;">197902271998031001</span>
<span id="t90" class="t" style="left:682px;top:272px;font-size:13.333px;line-height:16px;color:#000;font-weight:normal;width:315px;overflow:hidden;box-sizing:border-box;padding:0 3px;">Epidemiologi Ahli Muda</span>
<span id="t91" class="t" style="left:998px;top:272px;font-size:13.333px;line-height:16px;color:#000;font-weight:normal;width:83px;overflow:hidden;box-sizing:border-box;padding:0 3px;">PKSE</span>
<span id="t92" class="t" style="left:1082px;top:272px;font-size:13.333px;line-height:16px;color:#000;font-weight:normal;width:150px;overflow:hidden;box-sizing:border-box;padding:0 3px;">Kantor Induk/Bandara</span>
<span id="t93" class="t" style="left:46px;top:293px;font-size:13.333px;line-height:16px;color:#000;font-weight:normal;width:139px;overflow:hidden;box-sizing:border-box;padding:0 3px;text-align:right;">24/08/2022 10:23:03</span>
<span id="t94" class="t" style="left:186px;top:293px;font-size:13.333px;line-height:16px;color:#000;font-weight:normal;width:193px;overflow:hidden;box-sizing:border-box;padding:0 3px;">untung181@gmail.com</span>
<span id="t95" class="t" style="left:380px;top:293px;font-size:13.333px;line-height:16px;color:#000;font-weight:normal;width:150px;overflow:hidden;box-sizing:border-box;padding:0 3px;">UNTUNG KARYANTO</span>
<span id="t96" class="t" style="left:531px;top:293px;font-size:13.333px;line-height:16px;color:#000;font-weight:normal;width:150px;overflow:hidden;box-sizing:border-box;padding:0 3px;">197703161997031001</span>
<span id="t97" class="t" style="left:682px;top:293px;font-size:13.333px;line-height:16px;color:#000;font-weight:normal;width:315px;overflow:hidden;box-sizing:border-box;padding:0 3px;">EPIDEMIOLOG KESEHATAN</span>
<span id="t98" class="t" style="left:998px;top:293px;font-size:13.333px;line-height:16px;color:#000;font-weight:normal;width:83px;overflow:hidden;box-sizing:border-box;padding:0 3px;">PKSE</span>
<span id="t99" class="t" style="left:1082px;top:293px;font-size:13.333px;line-height:16px;color:#000;font-weight:normal;width:150px;overflow:hidden;box-sizing:border-box;padding:0 3px;">Kapuas</span>
<span id="t100" class="t" style="left:46px;top:314px;font-size:13.333px;line-height:16px;color:#000;font-weight:normal;width:139px;overflow:hidden;box-sizing:border-box;padding:0 3px;text-align:right;">24/08/2022 10:43:36</span>
<span id="t101" class="t" style="left:186px;top:314px;font-size:13.333px;line-height:16px;color:#000;font-weight:normal;width:193px;overflow:hidden;box-sizing:border-box;padding:0 3px;">briliansd@gmail.com</span>
<span id="t102" class="t" style="left:380px;top:314px;font-size:13.333px;line-height:16px;color:#000;font-weight:normal;width:150px;overflow:hidden;box-sizing:border-box;padding:0 3px;">Brilian Samuel Dehes</span>
<span id="t103" class="t" style="left:531px;top:314px;font-size:13.333px;line-height:16px;color:#000;font-weight:normal;width:150px;overflow:hidden;box-sizing:border-box;padding:0 3px;">199501102015031001</span>
<span id="t104" class="t" style="left:682px;top:314px;font-size:13.333px;line-height:16px;color:#000;font-weight:normal;width:315px;overflow:hidden;box-sizing:border-box;padding:0 3px;">Perawat Terampil</span>
<span id="t105" class="t" style="left:998px;top:314px;font-size:13.333px;line-height:16px;color:#000;font-weight:normal;width:83px;overflow:hidden;box-sizing:border-box;padding:0 3px;">PRL-KLW</span>
<span id="t106" class="t" style="left:1082px;top:314px;font-size:13.333px;line-height:16px;color:#000;font-weight:normal;width:150px;overflow:hidden;box-sizing:border-box;padding:0 3px;">Kelanis</span>
<span id="t107" class="t" style="left:46px;top:335px;font-size:13.333px;line-height:16px;color:#000;font-weight:normal;width:139px;overflow:hidden;box-sizing:border-box;padding:0 3px;text-align:right;">24/08/2022 10:44:59</span>
<span id="t108" class="t" style="left:186px;top:335px;font-size:13.333px;line-height:16px;color:#000;font-weight:normal;width:193px;overflow:hidden;box-sizing:border-box;padding:0 3px;">hizrahharianto@gmail.com</span>
<span id="t109" class="t" style="left:380px;top:335px;font-size:13.333px;line-height:16px;color:#000;font-weight:normal;width:150px;overflow:hidden;box-sizing:border-box;padding:0 3px;">Hizrah Harianto Sembiring</span>
<span id="t110" class="t" style="left:531px;top:335px;font-size:13.333px;line-height:16px;color:#000;font-weight:normal;width:150px;overflow:hidden;box-sizing:border-box;padding:0 3px;">198009162010121001</span>
<span id="t111" class="t" style="left:682px;top:335px;font-size:13.333px;line-height:16px;color:#000;font-weight:normal;width:315px;overflow:hidden;box-sizing:border-box;padding:0 3px;">Epidemiolog Kesehatan Ahli Muda / Korwil Kelanis</span>
<span id="t112" class="t" style="left:998px;top:335px;font-size:13.333px;line-height:16px;color:#000;font-weight:normal;width:83px;overflow:hidden;box-sizing:border-box;padding:0 3px;">PKSE</span>
<span id="t113" class="t" style="left:1082px;top:335px;font-size:13.333px;line-height:16px;color:#000;font-weight:normal;width:150px;overflow:hidden;box-sizing:border-box;padding:0 3px;">Kelanis</span>
<span id="t114" class="t" style="left:46px;top:356px;font-size:13.333px;line-height:16px;color:#000;font-weight:normal;width:139px;overflow:hidden;box-sizing:border-box;padding:0 3px;text-align:right;">24/08/2022 10:50:56</span>
<span id="t115" class="t" style="left:186px;top:356px;font-size:13.333px;line-height:16px;color:#000;font-weight:normal;width:193px;overflow:hidden;box-sizing:border-box;padding:0 3px;">m_fahrurrazi@yahoo.co.id</span>
<span id="t116" class="t" style="left:380px;top:356px;font-size:13.333px;line-height:16px;color:#000;font-weight:normal;width:150px;overflow:hidden;box-sizing:border-box;padding:0 3px;">Muhammad Fahrurrazi</span>
<span id="t117" class="t" style="left:531px;top:356px;font-size:13.333px;line-height:16px;color:#000;font-weight:normal;width:150px;overflow:hidden;box-sizing:border-box;padding:0 3px;">198602162014021001</span>
<span id="t118" class="t" style="left:682px;top:356px;font-size:13.333px;line-height:16px;color:#000;font-weight:normal;width:315px;overflow:hidden;box-sizing:border-box;padding:0 3px;">Sanitarian Terampil</span>
<span id="t119" class="t" style="left:998px;top:356px;font-size:13.333px;line-height:16px;color:#000;font-weight:normal;width:83px;overflow:hidden;box-sizing:border-box;padding:0 3px;">PRL-KLW</span>
<span id="t120" class="t" style="left:1082px;top:356px;font-size:13.333px;line-height:16px;color:#000;font-weight:normal;width:150px;overflow:hidden;box-sizing:border-box;padding:0 3px;">Post Bandara</span>
<span id="t121" class="t" style="left:46px;top:377px;font-size:13.333px;line-height:16px;color:#000;font-weight:normal;width:139px;overflow:hidden;box-sizing:border-box;padding:0 3px;text-align:right;">24/08/2022 10:58:01</span>
<span id="t122" class="t" style="left:186px;top:377px;font-size:13.333px;line-height:16px;color:#000;font-weight:normal;width:193px;overflow:hidden;box-sizing:border-box;padding:0 3px;">edobsaputra@gmail.com</span>
<span id="t123" class="t" style="left:380px;top:377px;font-size:13.333px;line-height:16px;color:#000;font-weight:normal;width:150px;overflow:hidden;box-sizing:border-box;padding:0 3px;">Edo Borneo Saputra</span>
<span id="t124" class="t" style="left:531px;top:377px;font-size:13.333px;line-height:16px;color:#000;font-weight:normal;width:150px;overflow:hidden;box-sizing:border-box;padding:0 3px;">-</span>
<span id="t125" class="t" style="left:682px;top:377px;font-size:13.333px;line-height:16px;color:#000;font-weight:normal;width:315px;overflow:hidden;box-sizing:border-box;padding:0 3px;">Admin/Perawat</span>
<span id="t126" class="t" style="left:998px;top:377px;font-size:13.333px;line-height:16px;color:#000;font-weight:normal;width:83px;overflow:hidden;box-sizing:border-box;padding:0 3px;">ADUM</span>
<span id="t127" class="t" style="left:1082px;top:377px;font-size:13.333px;line-height:16px;color:#000;font-weight:normal;width:150px;overflow:hidden;box-sizing:border-box;padding:0 3px;">Pulang Pisau</span>
<span id="t128" class="t" style="left:46px;top:398px;font-size:13.333px;line-height:16px;color:#000;font-weight:normal;width:139px;overflow:hidden;box-sizing:border-box;padding:0 3px;text-align:right;">24/08/2022 11:00:53</span>
<span id="t129" class="t" style="left:186px;top:398px;font-size:13.333px;line-height:16px;color:#000;font-weight:normal;width:193px;overflow:hidden;box-sizing:border-box;padding:0 3px;">suriya_kkppulpis@yahoo.co.id</span>
<span id="t130" class="t" style="left:380px;top:398px;font-size:13.333px;line-height:16px;color:#000;font-weight:normal;width:150px;overflow:hidden;box-sizing:border-box;padding:0 3px;">Suriya</span>
<span id="t131" class="t" style="left:531px;top:398px;font-size:13.333px;line-height:16px;color:#000;font-weight:normal;width:150px;overflow:hidden;box-sizing:border-box;padding:0 3px;">197711292008121003</span>
<span id="t132" class="t" style="left:682px;top:398px;font-size:13.333px;line-height:16px;color:#000;font-weight:normal;width:315px;overflow:hidden;box-sizing:border-box;padding:0 3px;">Pengadministrasi umum</span>
<span id="t133" class="t" style="left:998px;top:398px;font-size:13.333px;line-height:16px;color:#000;font-weight:normal;width:83px;overflow:hidden;box-sizing:border-box;padding:0 3px;">ADUM</span>
<span id="t134" class="t" style="left:1082px;top:398px;font-size:13.333px;line-height:16px;color:#000;font-weight:normal;width:150px;overflow:hidden;box-sizing:border-box;padding:0 3px;">Pulang Pisau</span>
<span id="t135" class="t" style="left:46px;top:419px;font-size:13.333px;line-height:16px;color:#000;font-weight:normal;width:139px;overflow:hidden;box-sizing:border-box;padding:0 3px;text-align:right;">24/08/2022 11:01:37</span>
<span id="t136" class="t" style="left:186px;top:419px;font-size:13.333px;line-height:16px;color:#000;font-weight:normal;width:193px;overflow:hidden;box-sizing:border-box;padding:0 3px;">azmiariel@gmail.com</span>
<span id="t137" class="t" style="left:380px;top:419px;font-size:13.333px;line-height:16px;color:#000;font-weight:normal;width:150px;overflow:hidden;box-sizing:border-box;padding:0 3px;">Ahmad Rianto</span>
<span id="t138" class="t" style="left:531px;top:419px;font-size:13.333px;line-height:16px;color:#000;font-weight:normal;width:150px;overflow:hidden;box-sizing:border-box;padding:0 3px;">197608151998031002</span>
<span id="t139" class="t" style="left:682px;top:419px;font-size:13.333px;line-height:16px;color:#000;font-weight:normal;width:315px;overflow:hidden;box-sizing:border-box;padding:0 3px;">Ahmad Rianto</span>
<span id="t140" class="t" style="left:998px;top:419px;font-size:13.333px;line-height:16px;color:#000;font-weight:normal;width:83px;overflow:hidden;box-sizing:border-box;padding:0 3px;">PRL-KLW</span>
<span id="t141" class="t" style="left:1082px;top:419px;font-size:13.333px;line-height:16px;color:#000;font-weight:normal;width:150px;overflow:hidden;box-sizing:border-box;padding:0 3px;">Pulang Pisau</span>
<span id="t142" class="t" style="left:46px;top:440px;font-size:13.333px;line-height:16px;color:#000;font-weight:normal;width:139px;overflow:hidden;box-sizing:border-box;padding:0 3px;text-align:right;">24/08/2022 11:02:55</span>
<span id="t143" class="t" style="left:186px;top:440px;font-size:13.333px;line-height:16px;color:#000;font-weight:normal;width:193px;overflow:hidden;box-sizing:border-box;padding:0 3px;">hendryebon@gmail.com</span>
<span id="t144" class="t" style="left:380px;top:440px;font-size:13.333px;line-height:16px;color:#000;font-weight:normal;width:150px;overflow:hidden;box-sizing:border-box;padding:0 3px;">Hendry,SE</span>
<span id="t145" class="t" style="left:531px;top:440px;font-size:13.333px;line-height:16px;color:#000;font-weight:normal;width:150px;overflow:hidden;box-sizing:border-box;padding:0 3px;">197008061992031002</span>
<span id="t146" class="t" style="left:682px;top:440px;font-size:13.333px;line-height:16px;color:#000;font-weight:normal;width:315px;overflow:hidden;box-sizing:border-box;padding:0 3px;">Entomolog kesehatan penyelia</span>
<span id="t147" class="t" style="left:998px;top:440px;font-size:13.333px;line-height:16px;color:#000;font-weight:normal;width:83px;overflow:hidden;box-sizing:border-box;padding:0 3px;">PRL-KLW</span>
<span id="t148" class="t" style="left:1082px;top:440px;font-size:13.333px;line-height:16px;color:#000;font-weight:normal;width:150px;overflow:hidden;box-sizing:border-box;padding:0 3px;">Pulang Pisau</span>
<span id="t149" class="t" style="left:46px;top:461px;font-size:13.333px;line-height:16px;color:#000;font-weight:normal;width:139px;overflow:hidden;box-sizing:border-box;padding:0 3px;text-align:right;">24/08/2022 11:31:40</span>
<span id="t150" class="t" style="left:186px;top:461px;font-size:13.333px;line-height:16px;color:#000;font-weight:normal;width:193px;overflow:hidden;box-sizing:border-box;padding:0 3px;">Lanikkpplk.1987@gmail.com</span>
<span id="t151" class="t" style="left:380px;top:461px;font-size:13.333px;line-height:16px;color:#000;font-weight:normal;width:150px;overflow:hidden;box-sizing:border-box;padding:0 3px;">Maulani</span>
<span id="t152" class="t" style="left:531px;top:461px;font-size:13.333px;line-height:16px;color:#000;font-weight:normal;width:150px;overflow:hidden;box-sizing:border-box;padding:0 3px;">198711132010121004</span>
<span id="t153" class="t" style="left:682px;top:461px;font-size:13.333px;line-height:16px;color:#000;font-weight:normal;width:315px;overflow:hidden;box-sizing:border-box;padding:0 3px;">Sanitarian</span>
<span id="t154" class="t" style="left:998px;top:461px;font-size:13.333px;line-height:16px;color:#000;font-weight:normal;width:83px;overflow:hidden;box-sizing:border-box;padding:0 3px;">PRL-KLW</span>
<span id="t155" class="t" style="left:1082px;top:461px;font-size:13.333px;line-height:16px;color:#000;font-weight:normal;width:150px;overflow:hidden;box-sizing:border-box;padding:0 3px;">Kelanis</span>
<div class="b" style="left:46px;top:667px;width:140px;height:12px;background:transparent;border:2px solid #1c67d3;box-sizing:border-box;border-bottom:none;"></div>
<div class="b" style="left:1299px;top:199px;width:11px;height:489px;background:#f8f9fa;"></div>
<div class="b" style="left:1298px;top:199px;width:1px;height:477px;background:#dcdcdc;"></div>
<div class="b" style="left:1299px;top:243px;width:11px;height:5px;background:#e1e4ea;"></div>
<div class="b" style="left:1300px;top:249px;width:9px;height:68.5px;background:#dadce0;border-radius:5px;"></div>
<div class="b" style="left:1299px;top:643px;width:11px;height:1px;background:#dcdcdc;"></div>
<div class="b" style="left:1299px;top:660px;width:11px;height:1px;background:#dcdcdc;"></div>
<svg class="b" style="left:1302.3px;top:650.2px;" width="5" height="3.2" viewBox="0 0 5 3.2"><path d="M0 3.2 L2.5 0 L5 3.2 Z" fill="#9aa0a6"/></svg>
<svg class="b" style="left:1302.3px;top:666.8px;" width="5" height="3.2" viewBox="0 0 5 3.2"><path d="M0 0 L2.5 3.2 L5 0 Z" fill="#9aa0a6"/></svg>
<div class="b" style="left:0px;top:676px;width:1310px;height:12px;background:#fff;"></div>
<div class="b" style="left:0px;top:676px;width:1310px;height:1px;background:#dcdcdc;"></div>
<div class="b" style="left:0px;top:677px;width:46px;height:11px;background:#f8f9fa;"></div>
<div class="b" style="left:45px;top:677px;width:1px;height:11px;background:#d5d5d5;"></div>
<div class="b" style="left:47px;top:678px;width:728px;height:9px;background:#dadce0;border-radius:5px;"></div>
<div class="b" style="left:1266px;top:677px;width:33px;height:11px;background:#f8f9fa;"></div>
<div class="b" style="left:1299px;top:677px;width:11px;height:11px;background:#f1f3f4;"></div>
<div class="b" style="left:1266px;top:677px;width:1px;height:11px;background:#dcdcdc;"></div>
<div class="b" style="left:1282px;top:677px;width:1px;height:11px;background:#dcdcdc;"></div>
<div class="b" style="left:1298px;top:677px;width:1px;height:11px;background:#dcdcdc;"></div>
<svg class="b" style="left:1272px;top:680px;" width="3.2" height="5" viewBox="0 0 3.2 5"><path d="M3.2 0 L0 2.5 L3.2 5 Z" fill="#80868b"/></svg>
<svg class="b" style="left:1288.6px;top:680px;" width="3.2" height="5" viewBox="0 0 3.2 5"><path d="M0 0 L3.2 2.5 L0 5 Z" fill="#80868b"/></svg>
<div class="b" style="left:0px;top:688px;width:1310px;height:39px;background:#f1f3f4;"></div>
<div class="b" style="left:0px;top:688px;width:1310px;height:1px;background:#e4e6e8;"></div>
<svg class="b" style="left:51px;top:702.3px;" width="10" height="10" viewBox="0 0 10 10"><path d="M5 0 V10 M0 5 H10" stroke="#444746" stroke-width="1.9" fill="none"/></svg>
<svg class="b" style="left:80.5px;top:702px;" width="12.8" height="11" viewBox="0 0 12.8 11"><path d="M0 1 H12.8 M0 4 H12.8 M0 7 H12.8 M0 10 H12.8" stroke="#444746" stroke-width="2" fill="none"/></svg>
<div class="b" style="left:117px;top:688px;width:196px;height:39px;background:#fff;box-shadow:0 1px 3px 1px rgba(60,64,67,.2);"></div>
<svg class="b" style="left:132px;top:699px;" width="18" height="18" viewBox="0 0 18 18"><rect width="18" height="18" rx="2.500" fill="#7627bb"/><g fill="#fff"><rect x="4" y="4.300" width="2" height="2"/><rect x="7.300" y="4.300" width="7" height="2"/><rect x="4" y="8" width="2" height="2"/><rect x="7.300" y="8" width="7" height="2"/><rect x="4" y="11.700" width="2" height="2"/><rect x="7.300" y="11.700" width="7" height="2"/></g></svg>
<span id="t156" class="t" style="left:155px;top:698px;font-size:15px;line-height:20px;color:#22864a;font-weight:normal;letter-spacing:-0.115px;text-shadow:0.2px 0 0 #22864a;">Form Responses 1</span>
<svg class="b" style="left:289.8px;top:706.2px;" width="7.6" height="4" viewBox="0 0 7.6 4"><path d="M0 0 H7.6 L3.8 4 Z" fill="#1b7a3a"/></svg>
<div class="b" style="left:1205px;top:689px;width:105px;height:38px;background:#fff;box-shadow:-1px 0 2px rgba(60,64,67,.25);"></div>
<svg class="b" style="left:1218px;top:699px;" width="18" height="21" viewBox="0 0 18 21"><path d="M2 0 H16 A2 2 0 0 1 18 2 V16 A2 2 0 0 1 16 18 H11.500 L9 20.500 L6.500 18 H2 A2 2 0 0 1 0 16 V2 A2 2 0 0 1 2 0 Z" fill="#0f9d58"/><path d="M9 3.500 L10.600 7.400 L14.500 9 L10.600 10.600 L9 14.500 L7.400 10.600 L3.500 9 L7.400 7.400 Z" fill="#fff"/></svg>
<span id="t157" class="t" style="left:1250.5px;top:701px;font-size:12.3px;line-height:16px;color:#0f9d58;font-weight:normal;letter-spacing:-0.288px;">Pelajari</span>
<div class="b" style="left:1311px;top:136px;width:9px;height:591px;background:#fff;"></div>
<div class="b" style="left:0px;top:135px;width:1320px;height:1px;background:#dadce0;"></div>
</div>
</body></html>
